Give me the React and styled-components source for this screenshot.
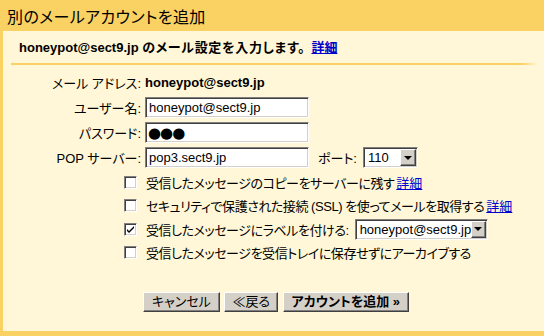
import React from 'react'
import styled, { createGlobalStyle } from 'styled-components'

const GlobalStyle = createGlobalStyle`
  html, body {
    margin: 0;
    padding: 0;
    background: #fff7d7;
  }
  body {
    font-family: "Liberation Sans", "Noto Sans CJK JP", sans-serif;
    font-feature-settings: "palt";
  }
`

const Page = styled.div`
  width: 544px;
  height: 336px;
  display: flex;
  flex-direction: column;
  overflow: hidden;
`

const Header = styled.div`
  height: 31px;
  flex: none;
  background: #fad163;
  display: flex;
  align-items: center;
  padding-left: 7px;
  font-size: 16px;
  letter-spacing: 0.4px;
  color: #000;
`

const Body = styled.div`
  flex: 1;
  background: #fff7d7;
  border-left: 3px solid #fad163;
  border-bottom: 5px solid #fad163;
  display: flex;
  flex-direction: column;
`

const Intro = styled.div`
  padding: 9px 0 0 16px;
  height: 16px;
  line-height: 16px;
  font-size: 13px;
  font-weight: bold;
`

const Wide = styled.span`
  letter-spacing: 0.7px;
`

const Link = styled.a`
  color: #0000cc;
  text-decoration: underline;
  font-weight: ${p => (p.$bold ? 'bold' : 'normal')};
  margin-left: ${p => p.$gap || 0}px;
  letter-spacing: 0;
  cursor: pointer;
`

const Rule = styled.div`
  height: 2px;
  margin: 7px 6px 0 8px;
  background: linear-gradient(to right, #fad163 97%, #fff7d7);
`

const FormGrid = styled.div`
  display: grid;
  grid-template-columns: 138px auto;
  column-gap: 4px;
  row-gap: 4px;
  grid-auto-rows: 21px;
  margin-top: 7px;
  align-items: center;
  font-size: 13px;
`

const Label = styled.div`
  text-align: right;
  white-space: nowrap;
`

const Value = styled.div`
  display: flex;
  align-items: center;
  font-weight: ${p => (p.$bold ? 'bold' : 'normal')};
`

const PortLabel = styled.span`
  margin: 0 6px 0 9px;
`

const TextBox = styled.div`
  box-sizing: border-box;
  width: ${p => p.$w || 164}px;
  height: 21px;
  background: #fff;
  border: 1px solid;
  border-color: #808080 #fff #fff #808080;
  box-shadow: inset 1px 1px #404040, inset -1px -1px #d4d0c8;
  padding: 0 3px;
  display: flex;
  align-items: center;
  font-size: 13px;
  letter-spacing: 0;
  white-space: nowrap;
  overflow: hidden;
`

const Dots = styled.span`
  font-family: "DejaVu Sans", sans-serif;
  font-size: 15px;
  letter-spacing: -1px;
  margin-left: -1px;
`

const Select = styled(TextBox)`
  padding: 0 2px 0 4px;
  justify-content: space-between;
  margin-left: ${p => p.$gap || 0}px;
`

const ArrowButton = styled.span`
  box-sizing: border-box;
  width: 16px;
  height: 17px;
  background: #d4d0c8;
  border: 1px solid;
  border-color: #fff #404040 #404040 #fff;
  box-shadow: inset -1px -1px #808080;
  display: flex;
  align-items: center;
  justify-content: center;
  margin-right: -1px;

  &::after {
    content: "";
    border-left: 4px solid transparent;
    border-right: 4px solid transparent;
    border-top: 4px solid #000;
  }
`

const Options = styled.div`
  display: flex;
  flex-direction: column;
  gap: 2.4px;
  margin-top: 4px;
  padding-left: 121px;
  font-size: 13px;
  letter-spacing: -0.45px;
`

const OptionRow = styled.label`
  display: flex;
  align-items: center;
  height: 21px;
  white-space: nowrap;
`

const Box = styled.span`
  box-sizing: border-box;
  width: 13px;
  height: 13px;
  flex: none;
  margin-right: 9px;
  background: #fff;
  border: 1px solid;
  border-color: #808080 #fff #fff #808080;
  box-shadow: inset 1px 1px #404040, inset -1px -1px #d4d0c8;
  display: flex;
  align-items: center;
  justify-content: center;
`

const Buttons = styled.div`
  display: flex;
  gap: 4.5px;
  margin-top: 29px;
  padding-left: 140px;
`

const Button = styled.button`
  box-sizing: border-box;
  height: 20px;
  padding: 0 ${p => p.$pad || 8}px;
  background: #d4d0c8;
  border: 1px solid;
  border-color: #fff #404040 #404040 #fff;
  box-shadow: inset -1px -1px #808080;
  font-family: "Liberation Sans", "Noto Sans CJK JP", sans-serif;
  font-feature-settings: "palt";
  font-size: 13px;
  font-weight: ${p => (p.$bold ? 'bold' : 'normal')};
  color: #000;
  line-height: 16px;
  white-space: nowrap;
`

const Check = ({ on }) => (
  <Box>
    {on && (
      <svg width="7" height="7" viewBox="0 0 7 7">
        <path d="M0 3 L0 5 L2 7 L7 2 L7 0 L2 5 Z" fill="#000" />
      </svg>
    )}
  </Box>
)

export default function App() {
  return (
    <Page>
      <GlobalStyle />
      <Header>別のメールアカウントを追加</Header>
      <Body>
        <Intro>
          honeypot@sect9.jp <Wide>のメール設定を入力します。</Wide><Link $bold $gap={6}>詳細</Link>
        </Intro>
        <Rule />
        <FormGrid>
          <Label>メール アドレス:</Label>
          <Value $bold>honeypot@sect9.jp</Value>
          <Label>ユーザー名:</Label>
          <Value><TextBox>honeypot@sect9.jp</TextBox></Value>
          <Label>パスワード:</Label>
          <Value><TextBox><Dots>●●●</Dots></TextBox></Value>
          <Label>POP サーバー:</Label>
          <Value>
            <TextBox>pop3.sect9.jp</TextBox>
            <PortLabel>ポート:</PortLabel>
            <Select $w={55}>110<ArrowButton /></Select>
          </Value>
        </FormGrid>
        <Options>
          <OptionRow>
            <Check />受信したメッセージのコピーをサーバーに残す<Link $gap={2}>詳細</Link>
          </OptionRow>
          <OptionRow>
            <Check />セキュリティで保護された接続 (SSL) を使ってメールを取得する<Link $gap={2}>詳細</Link>
          </OptionRow>
          <OptionRow>
            <Check on />受信したメッセージにラベルを付ける:
            <Select $w={133} $gap={6}>honeypot@sect9.jp<ArrowButton /></Select>
          </OptionRow>
          <OptionRow>
            <Check />受信したメッセージを受信トレイに保存せずにアーカイブする
          </OptionRow>
        </Options>
        <Buttons>
          <Button>キャンセル</Button>
          <Button $pad={7}>≪戻る</Button>
          <Button $bold $pad={8}>アカウントを追加 »</Button>
        </Buttons>
      </Body>
    </Page>
  )
}
